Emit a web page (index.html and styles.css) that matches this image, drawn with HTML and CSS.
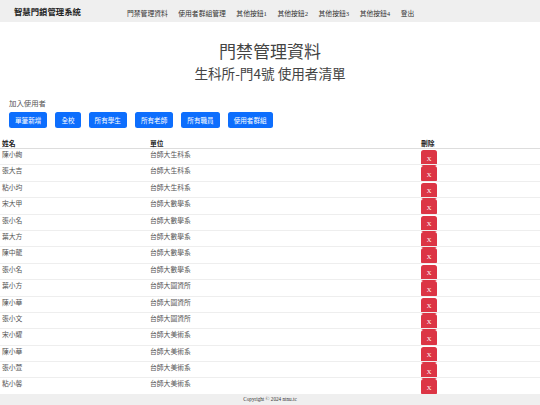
FILE: index.html
```html
<!DOCTYPE html>
<html lang="zh-Hant">
<head>
    <meta charset="UTF-8">
    <meta name="viewport" content="width=device-width, initial-scale=1.0">
    <title>門禁管理資料</title>
    <link rel="stylesheet" href="styles.css">
</head>
<body>
    <nav class="topbar">
        <span class="brand">智慧門鎖管理系統</span>
        <ul class="nav-links">
            <li><a href="#">門禁管理資料</a></li>
            <li><a href="#">使用者群組管理</a></li>
            <li><a href="#">其他按鈕1</a></li>
            <li><a href="#">其他按鈕2</a></li>
            <li><a href="#">其他按鈕3</a></li>
            <li><a href="#">其他按鈕4</a></li>
            <li><a href="#">登出</a></li>
        </ul>
    </nav>

    <header class="page-title">
        <h1>門禁管理資料</h1>
        <h2>生科所-門4號 使用者清單</h2>
    </header>

    <section class="add-users">
        <p class="add-label">加入使用者</p>
        <div class="add-buttons">
            <button class="btn-blue">單筆新增</button>
            <button class="btn-blue">全校</button>
            <button class="btn-blue">所有學生</button>
            <button class="btn-blue">所有老師</button>
            <button class="btn-blue">所有職員</button>
            <button class="btn-blue">使用者群組</button>
        </div>
    </section>

    <table class="user-table">
        <thead>
            <tr>
                <th class="col-name">姓名</th>
                <th class="col-unit">單位</th>
                <th class="col-del">刪除</th>
            </tr>
        </thead>
        <tbody>
            <tr><td>陳小絢</td><td>台師大生科系</td><td><button class="btn-del">X</button></td></tr>
            <tr><td>張大吉</td><td>台師大生科系</td><td><button class="btn-del">X</button></td></tr>
            <tr><td>粘小均</td><td>台師大生科系</td><td><button class="btn-del">X</button></td></tr>
            <tr><td>宋大甲</td><td>台師大數學系</td><td><button class="btn-del">X</button></td></tr>
            <tr><td>張小名</td><td>台師大數學系</td><td><button class="btn-del">X</button></td></tr>
            <tr><td>葉大方</td><td>台師大數學系</td><td><button class="btn-del">X</button></td></tr>
            <tr><td>陳中龍</td><td>台師大數學系</td><td><button class="btn-del">X</button></td></tr>
            <tr><td>張小名</td><td>台師大數學系</td><td><button class="btn-del">X</button></td></tr>
            <tr><td>葉小方</td><td>台師大圖資所</td><td><button class="btn-del">X</button></td></tr>
            <tr><td>陳小華</td><td>台師大圖資所</td><td><button class="btn-del">X</button></td></tr>
            <tr><td>張小文</td><td>台師大圖資所</td><td><button class="btn-del">X</button></td></tr>
            <tr><td>宋小耀</td><td>台師大美術系</td><td><button class="btn-del">X</button></td></tr>
            <tr><td>陳小華</td><td>台師大美術系</td><td><button class="btn-del">X</button></td></tr>
            <tr><td>張小萱</td><td>台師大美術系</td><td><button class="btn-del">X</button></td></tr>
            <tr><td>粘小馨</td><td>台師大美術系</td><td><button class="btn-del">X</button></td></tr>
        </tbody>
    </table>

    <footer class="footer">Copyright © 2024 ntnu.tc</footer>
</body>
</html>
```

FILE: styles.css
```css
body {
    margin: 0;
    font-family: "Liberation Serif", "Noto Sans CJK TC", serif;
    color: #212529;
    background-color: white;
}
.topbar {
    display: flex;
    align-items: center;
    height: 22px;
    padding-left: 14px;
    background-color: #efefef;
}
.brand {
    font-family: "Noto Sans CJK TC", sans-serif;
    font-size: 8.4px;
    font-weight: bold;
    color: #222;
    width: 113px;
}
.nav-links {
    display: flex;
    gap: 10.5px;
    margin: 0;
    padding: 0;
    list-style: none;
}
.nav-links a {
    font-size: 6.8px;
    color: #333;
    text-decoration: none;
}
.page-title {
    text-align: center;
    font-family: "Noto Sans CJK TC", sans-serif;
    color: #444;
    padding-top: 17px;
}
.page-title h1 {
    margin: 0;
    font-size: 17px;
    font-weight: normal;
    line-height: 24px;
}
.page-title h2 {
    margin: 0;
    font-size: 13.6px;
    font-weight: normal;
    line-height: 20px;
}
.add-users {
    padding: 14px 9px 0;
}
.add-label {
    margin: 0 0 4px;
    font-family: "Noto Sans CJK TC", sans-serif;
    font-size: 7.4px;
    color: #555;
}
.add-buttons {
    display: flex;
    gap: 8px;
}
.btn-blue {
    height: 16px;
    padding: 0 6px;
    font-family: "Noto Sans CJK TC", sans-serif;
    font-size: 6.6px;
    color: white;
    background-color: #0d6efd;
    border: none;
    border-radius: 2.5px;
}
.user-table {
    width: 100%;
    margin-top: 10px;
    border-collapse: collapse;
    font-family: "Noto Sans CJK TC", sans-serif;
    font-size: 6.8px;
}
.user-table th {
    text-align: left;
    font-weight: bold;
    color: #222;
    padding: 1px 2px 0;
    line-height: 9px;
    border-bottom: 1px solid #ddd;
}
.user-table td {
    vertical-align: top;
    padding: 1px 2px 0;
    height: 14.4px;
    line-height: 9px;
    color: #555;
    border-bottom: 1px solid #eee;
}
.col-name {
    width: 144px;
}
.col-unit {
    width: 267px;
}
.btn-del {
    display: block;
    width: 16px;
    height: 16px;
    margin-bottom: -3px;
    padding: 0;
    font-family: "Liberation Serif", serif;
    font-size: 6.5px;
    color: white;
    background-color: #dc3545;
    border: none;
    border-radius: 2.5px;
}
.footer {
    position: fixed;
    left: 0;
    right: 0;
    bottom: 0;
    height: 11px;
    line-height: 11px;
    text-align: center;
    font-size: 5.2px;
    color: #333;
    background-color: #efefef;
}
```
